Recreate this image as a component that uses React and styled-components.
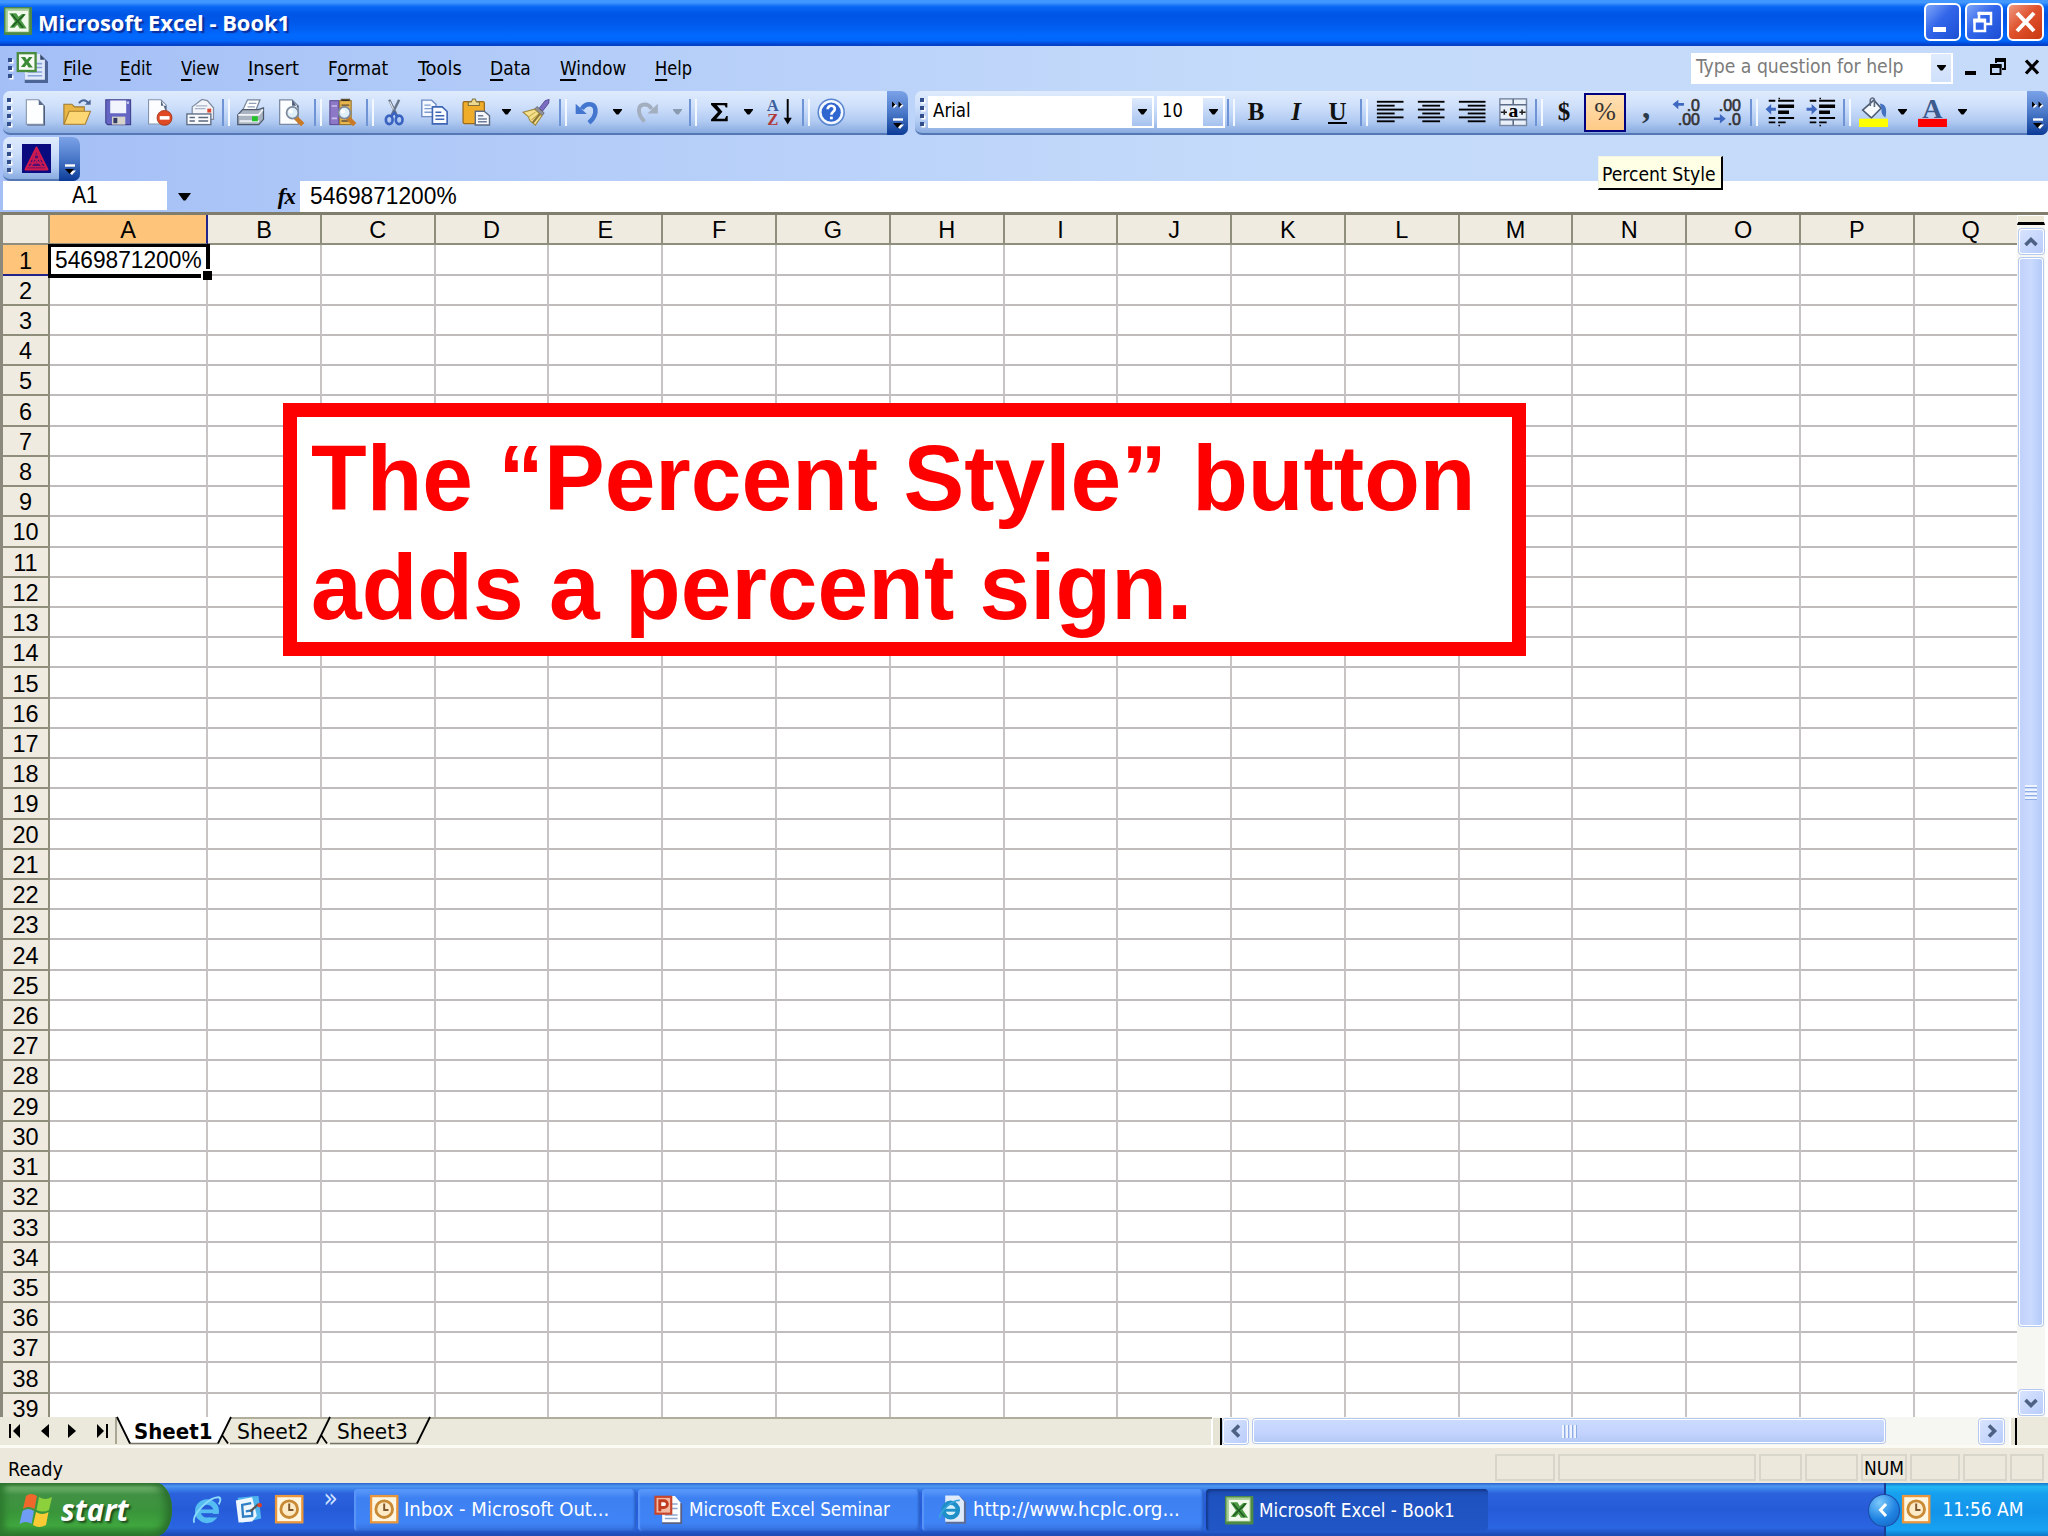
import { useLayoutEffect, useRef, useState } from "react";
import styled, { createGlobalStyle, css } from "styled-components";

const GlobalStyle = createGlobalStyle`
  * {
    box-sizing: border-box;
  }

  body {
    margin: 0;
    width: 2048px;
    height: 1536px;
    overflow: hidden;
    font-family: "DejaVu Sans Condensed", "DejaVu Sans", sans-serif;
    font-stretch: condensed;
    font-size: 19px;
    color: #000;
  }

  svg {
    display: block;
    flex: none;
    overflow: visible;
  }
`;

const Screen = styled.div`
  display: flex;
  flex-direction: column;
  width: 2048px;
  height: 1536px;
  overflow: hidden;
  background: linear-gradient(90deg, #a4bff6 0%, #b6cff9 33%, #c5dbfa 62%, #c6dbfa 100%);
`;

/* text squeezed or stretched to a set width */
const FitBox = styled.span`
  display: block;
  flex: none;
  height: 1.2em;
  line-height: 1.2em;
  white-space: pre;
`;

const FitInner = styled.span`
  display: inline-block;
  transform-origin: 0 50%;
`;

const Fit = ({ width, children, className }) => {
  const ref = useRef(null);
  const [scale, setScale] = useState(1);

  useLayoutEffect(() => {
    setScale(width / ref.current.offsetWidth);
  }, [width]);

  return (
    <FitBox className={className} style={{ width }}>
      <FitInner ref={ref} style={{ transform: `scaleX(${scale})` }}>
        {children}
      </FitInner>
    </FitBox>
  );
};

/* ---------- icons ---------- */

const Glyph = styled.text`
  font-family: "Liberation Serif", serif;
  font-weight: bold;
`;

const Digits = styled.text`
  font-family: "Liberation Sans", sans-serif;
  font-size: 8.8px;
  fill: #333;
  stroke: #333;
  stroke-width: 0.35px;
`;

const Icon = ({ size = 28.4, children }) => (
  <svg width={size} height={size} viewBox="0 0 16 16">
    {children}
  </svg>
);

const Arrow = ({ color = "#000" }) => (
  <svg width="9" height="6" viewBox="0 0 9 6">
    <path d="M0 0H9V1L5.5 5.5H3.5L0 1Z" fill={color} />
  </svg>
);

const ExcelIcon = ({ size }) => (
  <Icon size={size}>
    <rect width="16" height="16" rx="0.6" fill="#4e8a45" />
    <rect x="0.8" y="0.8" width="13.6" height="13.6" fill="#a5cc95" />
    <rect x="2.2" y="2.2" width="11.6" height="11.8" fill="#f1f8ec" />
    <path d="M3 3.5H7L8.3 5.6 10.3 4H12.5L9.8 7.6 13 12.3H9L7.6 10.2 6 11.8H3.2L6.2 8.2Z" fill="#4b9a43" />
    <path d="M4.4 4.2L11 11.8M11.6 4.3L4.6 11.3" stroke="#1f5c22" strokeWidth="0.9" />
  </Icon>
);

const BookIcon = () => (
  <Icon size={31}>
    <path d="M5 2H13L16 5V16H4V12Z" fill="#4c6496" />
    <path d="M4 1H12L14.4 4V14.3H4Z" fill="#dfe9fa" />
    <path d="M12 1V4H14.4Z" fill="#35486f" />
    <path d="M6 6H13M6 8H13M5.5 10.3H13M5.5 12.3H13" stroke="#86a2d6" strokeWidth="0.8" />
    <rect x="0.4" y="0.6" width="9.2" height="9.2" fill="#f6fbf3" stroke="#4a8c3e" strokeWidth="1.2" />
    <path d="M2 2.6H4.2L5.1 4 6.2 2.6H8L6 5.1 8.2 8H6L5 6.4 4 7.8H2L4 5.2Z" fill="#3b8a35" />
  </Icon>
);

const Page = () => (
  <>
    <path d="M3.5 1.5H10.5L13.5 4.5V15.5H3.5Z" fill="#49566e" />
    <path d="M3 1H10L12.7 4V14.8H3Z" fill="#fdfeff" stroke="#8493ac" strokeWidth="0.6" />
    <path d="M10 1V4H12.7Z" fill="#5a6c8c" />
  </>
);

const Magnifier = () => (
  <>
    <path d="M10.5 11L14.5 15" stroke="#c97a26" strokeWidth="2.6" />
    <circle cx="8.7" cy="8.3" r="3.3" fill="#dff0fb" stroke="#7e8a9b" strokeWidth="1" />
    <circle cx="7.8" cy="7.5" r="1.2" fill="#fff" />
  </>
);

const icons = {
  new: (
    <Icon>
      <Page />
    </Icon>
  ),
  open: (
    <Icon>
      <path d="M0.5 3.5H5L6.5 5H12V14.5H0.5Z" fill="#e9b545" stroke="#9c7a35" strokeWidth="0.6" />
      <path d="M3.5 7.5H15.5L12.5 14.8H0.6Z" fill="#fcd774" stroke="#a87f2f" strokeWidth="0.6" />
      <path d="M9 3C10.5 0.5 13 0.8 14.3 3" fill="none" stroke="#4c6797" strokeWidth="1.1" />
      <path d="M12.3 3.8H15.6V0.8Z" fill="#4c6797" />
    </Icon>
  ),
  save: (
    <Icon>
      <path d="M1 1H15V15H2L1 14Z" fill="#6464c2" stroke="#40408c" strokeWidth="0.6" />
      <rect x="3.5" y="1.4" width="9" height="7.2" fill="#f2f4fd" />
      <rect x="4.5" y="10.5" width="7.5" height="4.5" fill="#d5d3ca" />
      <rect x="5.3" y="11.2" width="2.2" height="3" fill="#333a63" />
      <rect x="12.8" y="2" width="1.3" height="1.3" fill="#c6c9ee" />
    </Icon>
  ),
  permission: (
    <Icon>
      <path d="M2 1H9L12 4V14.7H2Z" fill="#fbfdff" stroke="#8493ac" strokeWidth="0.6" />
      <path d="M9 1V4.3H12V8" fill="#566784" />
      <circle cx="11" cy="11.2" r="4.2" fill="#df4a25" stroke="#a43418" strokeWidth="0.5" />
      <rect x="8.3" y="10.2" width="5.5" height="2" fill="#fff" />
    </Icon>
  ),
  email: (
    <Icon>
      <path d="M3.5 5L9 0.8 12 1.5 15.5 5.5V12H3.5Z" fill="#f3f5fa" stroke="#7f8ba0" strokeWidth="0.7" />
      <path d="M5.5 4.5H12M5 6H11" stroke="#a9b4c6" strokeWidth="0.7" />
      <rect x="12" y="6" width="2.2" height="2.2" fill="#d84a30" />
      <rect x="0.5" y="9" width="13.5" height="6" fill="#fbfcfe" stroke="#63718a" strokeWidth="0.8" />
      <path d="M2 11H5M7 11H12.5M2 13H5M7 13H12.5" stroke="#59677f" strokeWidth="0.9" />
    </Icon>
  ),
  print: (
    <Icon>
      <path d="M6.5 1H13.5L11 7.5H3.5Z" fill="#fff" stroke="#77859a" strokeWidth="0.7" />
      <path d="M7.2 3H11.5M6.5 5H10.7" stroke="#8fa0b8" strokeWidth="0.7" />
      <path d="M1 9.5L3.7 6.5H12.5L15.5 5.5V12L12.8 15H1Z" fill="#aab3c0" stroke="#4b586c" strokeWidth="0.7" />
      <path d="M1.3 9.5H12.8L15.2 6.5" fill="none" stroke="#f4f6fa" strokeWidth="0.9" />
      <rect x="2" y="12.5" width="11" height="1.2" fill="#e8edf3" />
      <rect x="9" y="10.3" width="3.3" height="2.8" fill="#22c42a" />
    </Icon>
  ),
  preview: (
    <Icon>
      <path d="M1.5 1H8.5L12 4.5V14.8H1.5Z" fill="#fbfdff" stroke="#7b89a0" strokeWidth="0.7" />
      <path d="M8.5 1V4.3H12V6Z" fill="#4a5b7a" />
      <Magnifier />
    </Icon>
  ),
  research: (
    <Icon>
      <rect x="0.5" y="1.5" width="5" height="13.5" fill="#8c78c6" stroke="#5c4c94" strokeWidth="0.6" />
      <path d="M1.5 4.5H4.5M1.5 11.5H4.5" stroke="#c8bdec" strokeWidth="0.9" />
      <rect x="6" y="1.5" width="6.5" height="13.5" fill="#e8b64d" stroke="#93702c" strokeWidth="0.6" />
      <path d="M7 1.5V0.8H11.5V1.5M7 4H11.5M7 13H11" stroke="#5f5038" strokeWidth="0.8" />
      <Magnifier />
    </Icon>
  ),
  cut: (
    <Icon>
      <path d="M5.2 1L9.6 10M10.8 1L6.4 10" stroke="#687587" strokeWidth="1.4" />
      <path d="M5.5 2L7.6 6.3" stroke="#e4e9f0" strokeWidth="0.6" />
      <ellipse cx="5.2" cy="12.3" rx="1.9" ry="2.4" fill="none" stroke="#3a62c0" strokeWidth="1.5" />
      <ellipse cx="10.8" cy="12.3" rx="1.9" ry="2.4" fill="none" stroke="#3a62c0" strokeWidth="1.5" />
      <path d="M6.3 10.6L8 8.2 9.7 10.6" fill="none" stroke="#3a62c0" strokeWidth="1.3" />
    </Icon>
  ),
  copy: (
    <Icon>
      <path d="M1 1.2H6.5L9 3.5V10.5H1Z" fill="#f4f8ff" stroke="#6f8cc4" strokeWidth="0.8" />
      <path d="M2.5 4H6M2.5 6H7M2.5 8H7" stroke="#7d9bd0" strokeWidth="0.8" />
      <path d="M7 5H12.5L15.3 7.6V14.6H7Z" fill="#f7faff" stroke="#3f66b5" strokeWidth="0.9" />
      <path d="M8.7 8H12M8.7 10H13.7M8.7 12H13.7" stroke="#3f66b5" strokeWidth="0.9" />
    </Icon>
  ),
  paste: (
    <Icon>
      <rect x="0.6" y="2" width="12" height="12.4" rx="0.8" fill="#f0ad2c" stroke="#9a6a1a" strokeWidth="0.7" />
      <path d="M3.5 4.2V2.2H5.2L6 0.6H7.4L8.2 2.2H9.8V4.2Z" fill="#ecd98f" stroke="#81723c" strokeWidth="0.6" />
      <path d="M7.5 7.5H12.5L15.5 10V15.2H7.5Z" fill="#f5f7fb" stroke="#5c6a82" strokeWidth="0.8" />
      <path d="M9 10H12M9 11.8H14M9 13.4H14" stroke="#6c7c98" strokeWidth="0.8" />
    </Icon>
  ),
  painter: (
    <Icon>
      <path d="M9.7 5.8L13 1.5 15.3 0.8 15 3 11.5 7.5Z" fill="#7a6cc0" stroke="#51468c" strokeWidth="0.5" />
      <path d="M8.5 4.8L12.5 8.4 11.3 10 7.2 6.2Z" fill="#8f8f96" stroke="#55555c" strokeWidth="0.4" />
      <path d="M7 6.3L11.2 10 7.5 15.3 4.5 12.8 3.5 10.5 0.6 8Z" fill="#f5e08c" stroke="#9f8a40" strokeWidth="0.6" />
      <path d="M6 14L10 9" stroke="#8b7636" strokeWidth="1.2" />
      <path d="M4 10.5L7.5 8M5.3 12.4L9 9.2" stroke="#c9ae53" strokeWidth="0.6" />
    </Icon>
  ),
  undo: (
    <Icon>
      <path d="M5 6.2C7 2.6 12 2.6 12.6 6.4 13 9.5 11.3 12 9 14" fill="none" stroke="#4376cf" strokeWidth="2.6" />
      <path d="M1.5 3.2V9H7.8Z" fill="#4376cf" />
    </Icon>
  ),
  redo: (
    <Icon>
      <path d="M10.5 6.2C8.8 2.8 4 2.8 3.4 6.2 3 9.3 4.7 11.5 6.5 13.3" fill="none" stroke="#a3aebf" strokeWidth="2.2" />
      <path d="M14 3.2V8.8H8.2Z" fill="#a3aebf" />
    </Icon>
  ),
  sum: (
    <Icon>
      <path d="M3.4 2.8H12.6V5.4H11.7L11 4.1H6.7L9.8 7.8 6.4 11.7H11.2L12 10.2H12.8V13.1H3.4V12.1L7.3 7.9 3.4 3.8Z" />
    </Icon>
  ),
  sort: (
    <Icon>
      <Glyph x="1" y="7.2" fontSize="9.4" fill="#3b5f9e">
        A
      </Glyph>
      <Glyph x="1.2" y="15.2" fontSize="9.4" fill="#b03a3a">
        Z
      </Glyph>
      <path d="M12.8 0.6V12" stroke="#000" strokeWidth="1.1" />
      <path d="M10.5 11.2H15.1L12.8 15Z" />
    </Icon>
  ),
  help: (
    <Icon>
      <circle cx="8" cy="8" r="7.3" fill="#f3f8ff" stroke="#5a86cf" strokeWidth="0.9" />
      <circle cx="8" cy="8" r="5.4" fill="#2f66cf" />
      <path d="M6 6.4C6 3.6 10.4 3.8 10 6.5 9.8 7.8 8.1 7.8 8.1 9.4" fill="none" stroke="#fff" strokeWidth="1.5" />
      <rect x="7.3" y="10.5" width="1.6" height="1.5" fill="#fff" />
    </Icon>
  ),
  merge: (
    <Icon>
      <rect x="0.5" y="0.5" width="15" height="15" fill="#e9f0fa" stroke="#77869f" strokeWidth="0.8" />
      <path d="M0.5 3.8H15.5M0.5 12.2H15.5M8 0.5V3.8M8 12.2V15.5" stroke="#5d6d88" strokeWidth="0.9" />
      <path d="M1 8H4.5M11.5 8H15M3 6.5V9.5M13 6.5V9.5" stroke="#222" strokeWidth="0.9" />
      <Glyph x="5.3" y="10.9" fontSize="11">
        a
      </Glyph>
    </Icon>
  ),
  incDecimal: (
    <Icon size={29}>
      <path d="M0.3 3.5L3.5 0.9V2.8H6.6V4.3H3.5V6.2Z" fill="#3f68c0" />
      <Digits x="8.1" y="7.2">
        .0
      </Digits>
      <Digits x="3.2" y="15">
        .00
      </Digits>
    </Icon>
  ),
  decDecimal: (
    <Icon size={29}>
      <path d="M7 11.4L3.8 8.8V10.7H0.5V12.2H3.8V14.1Z" fill="#3f68c0" />
      <Digits x="3.2" y="7.2">
        .00
      </Digits>
      <Digits x="8.1" y="15">
        .0
      </Digits>
    </Icon>
  ),
};

const AlignIcon = ({ kind }) => {
  const rows = [15, 10, 15, 10, 15, 10].map((w, i) => {
    const x = { left: 0.5, center: 8 - w / 2, right: 15.5 - w }[kind];
    return <rect key={i} x={x} y={1.6 + i * 2.2} width={w} height="1.05" />;
  });
  return <Icon>{rows}</Icon>;
};

const IndentIcon = ({ out }) => (
  <Icon size={30}>
    <path d="M2 2H5.5M7 2H15.5M2 13.5H5.5M7 13.5H11" stroke="#000" strokeWidth="1" />
    <path d="M7 4.9H15.5M7 8.1H12.8" stroke="#000" strokeWidth="1.9" />
    <path d="M2 11.2H5.5M7 11.2H15.5" stroke="#000" strokeWidth="1" />
    <path d="M7.6 0.4V1.2M7.6 14.8V15.6" stroke="#000" strokeWidth="0.8" />
    {out ? (
      <path d="M0.3 6.5L3.3 3.7V5.7H5.8V7.3H3.3V9.3Z" fill="#3f68c0" />
    ) : (
      <path d="M6 6.5L3 3.7V5.7H0.3V7.3H3V9.3Z" fill="#3f68c0" />
    )}
  </Icon>
);

const FillIcon = () => (
  <svg width="29" height="30" viewBox="0 0 16 16.6">
    <path d="M2 7.2L8.2 1.8 12.2 6.2 6.8 11.6Z" fill="#f6f9fd" stroke="#4c5b74" strokeWidth="0.9" />
    <path d="M6.2 5V1.6C6.6 0.1 8.4 0.3 8.5 1.6V5.5" fill="none" stroke="#5f6c80" strokeWidth="0.9" />
    <path d="M11.5 3.6C15 3.8 15.6 7 14.6 11.4 13 10.3 12.2 9 12.4 6.6Z" fill="#4472c0" />
    <rect y="12" width="16" height="4.6" fill="#ff0" />
  </svg>
);

const FontColorIcon = () => (
  <svg width="29" height="30" viewBox="0 0 16 16.6">
    <Glyph x="8" y="11.4" fontSize="15.5" textAnchor="middle" fill="#3c5a8e">
      A
    </Glyph>
    <rect y="12.1" width="16" height="4.5" fill="#f00" />
  </svg>
);

const TriangleIcon = () => (
  <Icon size={29}>
    <rect width="16" height="16" fill="#0b0b80" />
    <path d="M8 2L14 14H2Z" fill="#4a0f70" stroke="#d21a4c" strokeWidth="1.2" strokeLinejoin="round" />
    <path d="M6 6H10M5 8.3H11M4 10.5H12M3 12.5H13M8 3L5 13M8 3L11 13M6 7L12 13M10 7L4 13" stroke="#c81b55" strokeWidth="0.8" />
  </Icon>
);

const OutlookIcon = ({ size }) => (
  <Icon size={size}>
    <rect x="0.6" y="0.6" width="14.8" height="14.8" fill="#fff6e2" stroke="#e9963c" strokeWidth="1.3" />
    <circle cx="8" cy="8" r="4.7" fill="#fdebc8" stroke="#c98a35" strokeWidth="1.6" />
    <path d="M8 4.8V8.4H10.4" fill="none" stroke="#80572c" strokeWidth="1.1" />
  </Icon>
);

const IeIcon = ({ size = 30 }) => (
  <Icon size={size}>
    <circle cx="8" cy="8.6" r="4.9" fill="none" stroke="#56bdf2" strokeWidth="3" />
    <path d="M4 8.7H13" stroke="#56bdf2" strokeWidth="2" />
    <path d="M9.5 10.1H15V12H9.5Z" fill="#2a62d8" />
    <path d="M1.2 14.8C-0.5 11 9 1 14.2 1.2 15.8 1.6 15 3.8 14.2 5" fill="none" stroke="#8ad8fa" strokeWidth="1" />
  </Icon>
);

const IePageIcon = () => (
  <Icon size={29}>
    <path d="M4.5 0.5H12L15.5 4V15.8H4.5Z" fill="#5d6d95" />
    <path d="M4 0.3H11.5L14.3 3.5V14.8H4Z" fill="#dfeafb" />
    <circle cx="7" cy="8.3" r="4" fill="#d5f0fd" stroke="#1f8fc8" strokeWidth="2.4" />
    <path d="M3.6 8.4H10.5" stroke="#1f8fc8" strokeWidth="1.6" />
    <path d="M0.8 13C1 9 8 2.5 12 3" fill="none" stroke="#3aa4dc" strokeWidth="1" />
  </Icon>
);

const DesktopIcon = () => (
  <Icon size={29}>
    <path d="M2 1.5L13.5 0.5 15 13 4 15.5Z" fill="#4fb4ee" />
    <path d="M1 3L10 1.2 12.6 11.5 10 14.6 2.5 15.2Z" fill="#eef7ff" />
    <path d="M9.5 4.5L4.5 5.5 5 12 10 11.5 10 8.5 6.5 9" fill="none" stroke="#2f7fc4" strokeWidth="1.3" />
    <path d="M9 9L13.5 5" stroke="#555" strokeWidth="1.2" />
    <circle cx="14.2" cy="5.6" r="1.2" fill="#e23c22" />
  </Icon>
);

const PowerPointIcon = () => (
  <Icon size={29}>
    <path d="M5.5 1.5H12L15.5 5V16H4.5V12Z" fill="#5b5f80" />
    <path d="M4.5 0.5H11.5L14.5 4V15H4.5Z" fill="#fbfdff" />
    <path d="M9.5 5H13M9.5 7.5H13M6 11H13M6 13H13" stroke="#8fa6cf" strokeWidth="0.8" />
    <rect x="0.8" y="1" width="8.7" height="9.3" fill="#f3b9a0" stroke="#c7452a" strokeWidth="1.2" />
    <path d="M3.2 9V3.2H5.5A1.8 1.8 0 0 1 5.5 6.9H3.2" fill="#fff" stroke="#c23c20" strokeWidth="1.6" />
  </Icon>
);

const WindowsFlag = () => (
  <svg width="34" height="36" viewBox="0 0 34 36">
    <path d="M7 4Q12 0 18 4L15.5 17Q9 13 4 17Z" fill="#f0672b" />
    <path d="M20 5Q26 9 33 5L30 18Q24 21 17.5 18Z" fill="#8cd03c" />
    <path d="M3.5 19Q9 15 15 19L12.5 32Q7 28 0.5 32Z" fill="#6f9df5" />
    <path d="M17 20Q23 24 29.5 20L27 33Q20 37 14 33Z" fill="#fbcb35" />
  </svg>
);

/* ---------- title bar ---------- */

const TitleBar = styled.header`
  display: flex;
  flex: none;
  align-items: flex-start;
  height: 46px;
  padding: 7px 4px 0 4px;
  background: linear-gradient(#3f97ff 0, #4398ff 5%, #0866f4 15%, #0055e4 32%, #0058ea 48%, #0169fd 78%, #0166fb 88%, #0142cc 97%, #0a3fc0 100%);
`;

const Title = styled(Fit)`
  margin: 4px 0 0 6px;
  font-family: "Open Sans", sans-serif;
  font-size: 21px;
  font-weight: bold;
  font-stretch: normal;
  color: #fff;
  text-shadow: 2px 2px 1px #0a2f9e;
`;

const WindowButtons = styled.div`
  display: flex;
  gap: 4px;
  margin: -4px 0 0 auto;
`;

const WindowButton = styled.div`
  width: 37.5px;
  height: 38px;
  border: 2px solid #fff;
  border-radius: 6px;
  background: ${({ $close }) =>
    $close
      ? "linear-gradient(135deg, #ee9a80, #e0532f 45%, #c9370f)"
      : "linear-gradient(135deg, #7fa6f8, #3165ea 45%, #1c4fd4)"};
`;

/* ---------- menu ---------- */

const MenuBar = styled.nav`
  display: flex;
  flex: none;
  align-items: center;
  height: 44px;
  padding-left: 3px;
`;

const Grip = styled.div`
  display: flex;
  flex: none;
  flex-direction: column;
  align-items: center;
  justify-content: center;
  gap: 4px;
  width: ${({ $w }) => $w || 12}px;

  & > i {
    width: 4px;
    height: 4px;
    background: #324f8c;
    box-shadow: 1.5px 1.5px 0 #fff;
  }
`;

const GripDots = ({ count = 4, w }) => (
  <Grip $w={w}>
    {Array.from({ length: count }, (_, i) => (
      <i key={i} />
    ))}
  </Grip>
);

const MenuItem = styled.div`
  display: flex;
  flex: none;
  width: ${({ $w }) => $w}px;

  u {
    text-decoration-thickness: 2px;
    text-underline-offset: 4px;
  }
`;

const MenuIcon = styled.div`
  width: 46px;
  margin-top: -2px;
`;

const QuestionBox = styled.div`
  display: flex;
  align-items: center;
  width: 262px;
  height: 31px;
  margin-left: auto;
  padding: 0 2px 0 5px;
  background: #fff;
  color: #7b7b7b;
`;

const QuestionText = styled(Fit)`
  margin-top: -3px;
`;

const ComboButton = styled.div`
  display: flex;
  align-items: center;
  justify-content: center;
  flex: none;
  width: 20px;
  height: 28px;
  margin-left: auto;
  background: linear-gradient(#dfebfd, ${({ $flat }) => ($flat ? "#cfe0fb" : "#a5c2ef")});
`;

const MdiButtons = styled.div`
  display: flex;
  width: 83px;
  margin-right: 12px;
  padding-left: 4px;
`;

/* ---------- toolbars ---------- */

const ToolRow = styled.div`
  display: flex;
  flex: none;
  gap: 7px;
  height: 44px;
  margin-top: ${({ $top }) => $top || 0}px;
  padding-left: 3px;
`;

const Toolbar = styled.div`
  display: flex;
  align-items: center;
  width: ${({ $w }) => $w}px;
  height: 44px;
  border-bottom: 2px solid #5577b4;
  border-radius: 7px;
  background: linear-gradient(#dfebfd 0%, #cfe0fb 35%, #b3ccf3 70%, #89abe0 100%);
`;

const Tool = styled.div`
  display: flex;
  align-items: center;
  justify-content: center;
  flex: none;
  width: ${({ $w }) => $w || 41}px;
  height: 39px;

  ${({ $active }) =>
    $active &&
    css`
      border: 2px solid #000080;
      background: linear-gradient(#fee0b4, #ffca86);
    `}
`;

const Separator = styled.div`
  display: flex;
  flex: none;
  justify-content: center;
  width: ${({ $w }) => $w || 11}px;

  &::before {
    content: "";
    width: 4px;
    height: 27px;
    border-left: 2px solid #6f94d6;
    border-right: 2px solid #f3f8ff;
  }
`;

const Options = styled.div`
  display: flex;
  flex: none;
  align-items: center;
  justify-content: ${({ $single }) => ($single ? "flex-end" : "space-between")};
  flex-direction: column;
  align-self: stretch;
  width: 21px;
  height: 44px;
  margin-left: auto;
  padding: 9px 0 5px;
  border-radius: 0 7px 7px 0;
  background: linear-gradient(#7ba2e7, #4a78c8 50%, #0b3b97);
`;

const SerifTool = styled.span`
  font-family: "Liberation Serif", serif;
  font-size: 25px;
  font-weight: bold;
  font-style: ${({ $italic }) => ($italic ? "italic" : "normal")};
  border-bottom: ${({ $under }) => ($under ? "2px solid #000" : "none")};
  line-height: ${({ $under }) => ($under ? 21 : 28)}px;
  color: #111;
`;

const PercentSign = styled.span`
  font-family: "Liberation Serif", serif;
  font-size: 26px;
  color: #333;
`;

const Comma = styled.span`
  padding-bottom: 10px;
  font-family: "Liberation Serif", serif;
  font-size: 33px;
  font-weight: bold;
  line-height: 36px;
  color: #2c3a4c;
`;

const Combo = styled.div`
  display: flex;
  align-items: center;
  flex: none;
  width: ${({ $w }) => $w}px;
  height: 32px;
  margin-right: ${({ $gap }) => $gap}px;
  padding: 0 2px 0 5px;
  background: #fff;
`;

const ComboText = styled(Fit)`
  margin-top: -3px;
`;

const OptionsGlyph = ({ single }) => (
  <Options $single={single}>
    {!single && (
      <svg width="13" height="10" viewBox="0 0 13 10">
        <path d="M2.5 2.5L6 5.5 2.5 8.5ZM9 2.5L12.5 5.5 9 8.5Z" fill="#fff" />
        <path d="M1 1.5L4.5 4.5 1 7.5ZM7.5 1.5L11 4.5 7.5 7.5Z" fill="#000" />
      </svg>
    )}
    <svg width="12" height="12" viewBox="0 0 12 12">
      <path d="M1 1.5H11" stroke="#fff" strokeWidth="2.4" />
      <path d="M3 6.5H12L8 11Z" fill="#fff" />
      <path d="M1 5H10L5.5 10Z" fill="#000" />
    </svg>
  </Options>
);

/* ---------- formula bar ---------- */

const FormulaBar = styled.div`
  display: flex;
  flex: none;
  height: 31px;
  margin-left: 3px;
  font-family: "Liberation Sans", sans-serif;
  font-size: 23.5px;
`;

const NameBox = styled.div`
  display: flex;
  align-items: center;
  justify-content: center;
  width: 164px;
  height: 29px;
  background: #fff;
`;

const FormulaTools = styled.div`
  display: flex;
  align-items: center;
  justify-content: space-between;
  width: 133px;
  padding: 0 5px 0 11px;
`;

const Fx = styled.span`
  font-family: "Liberation Serif", serif;
  font-size: 23px;
  font-style: italic;
  font-weight: bold;
  letter-spacing: -1px;
`;

const Formula = styled.div`
  display: flex;
  align-items: center;
  flex: 1;
  padding-left: 10px;
  background: #fff;
`;

/* ---------- sheet ---------- */

const SheetArea = styled.div`
  position: relative;
  display: flex;
  flex: none;
  height: 1205px;
  overflow: hidden;
  border-top: 3px solid #807d6c;
  border-left: 3px solid #8b897b;
  background: #fff;
`;

const Grid = styled.div`
  flex: none;
  width: 2014px;
  height: 1202px;
  overflow: hidden;
  font-family: "Liberation Sans", sans-serif;
  font-size: 23.5px;
`;

const GridRow = styled.div`
  display: flex;
  width: 2150px;
  height: ${({ $header }) => ($header ? 30.4 : 30.222)}px;
`;

const HeaderCell = styled.div`
  display: flex;
  align-items: center;
  justify-content: center;
  flex: none;
  width: ${({ $w }) => $w}px;
  padding-top: 2px;
  border-right: 2px solid #8f8d7c;
  border-bottom: 2px solid #8f8d7c;
  background: ${({ $on }) => ($on ? "#fdc47a" : "#f0ebe0")};
  line-height: 26px;

  ${({ $on }) => $on === "col" && "border-right-color: #23238c;"}
  ${({ $on }) => $on === "row" && "border-color: #23238c;"}
`;

const Cell = styled.div`
  flex: none;
  width: ${({ $w }) => $w}px;
  padding: 1px 0 0 5px;
  border-right: 2px solid #c8c4c4;
  border-bottom: 2px solid #c0bcbc;
  line-height: 28px;
`;

const Selection = styled.div`
  position: absolute;
  left: 45px;
  top: 29px;
  width: 162px;
  height: 34px;
  border: 3px solid #000;
  border-bottom-width: 4px;
  border-right-width: 4px;

  &::after {
    content: "";
    position: absolute;
    right: -6px;
    bottom: -6px;
    width: 9px;
    height: 9px;
    border: 1px solid #fff;
    border-width: 2px 0 0 2px;
    box-sizing: content-box;
    background: #000;
  }
`;

const Callout = styled.div`
  position: absolute;
  left: 280px;
  top: 188px;
  width: 1243px;
  height: 253px;
  padding: 7px 0 0 14px;
  border: 14px solid #f00;
  background: #fff;
  font-family: "Liberation Sans", sans-serif;
  font-size: 93px;
  font-weight: bold;
  color: #f00;
`;

const CalloutLine = styled(Fit)`
  height: 109px;
  line-height: 109px;
`;

const VScroll = styled.div`
  display: flex;
  flex-direction: column;
  align-items: center;
  width: 28px;
  background: #f6f6f2;
`;

const VSplit = styled.div`
  width: 28px;
  height: 10px;
  border: 1px solid #fff;
  border-bottom: 3px solid #000;
  background: #ece9d8;
`;

const scrollFace = css`
  display: flex;
  align-items: center;
  justify-content: center;
  flex: none;
  border: 1px solid #fff;
  border-radius: 3px;
  box-shadow: 0 0 0 1px #b5c8f0;
`;

const ScrollButton = styled.div`
  ${scrollFace}
  width: 25px;
  height: 25px;
  margin: ${({ $m }) => $m || 0};
  background: linear-gradient(135deg, #d8e3fe, #b9cdfb);
`;

const VThumb = styled.div`
  ${scrollFace}
  flex-direction: column;
  gap: 2px;
  width: 24px;
  height: 1068px;
  margin-top: 4px;
  background: linear-gradient(90deg, #c3d1fb, #c9dafd 50%, #b4cbfa);
`;

const HThumb = styled.div`
  ${scrollFace}
  gap: 2px;
  width: 632px;
  height: 24px;
  margin-left: 5px;
  background: linear-gradient(#cbdafd, #c3d3fd 60%, #b3c9f6);
`;

const GripLine = styled.i`
  width: ${({ $v }) => ($v ? 2 : 12)}px;
  height: ${({ $v }) => ($v ? 13 : 2)}px;
  background: #eef4fe;
  box-shadow: ${({ $v }) => ($v ? "1px 0" : "0 1px")} 0 #8eabe6;
`;

const Chevron = ({ turn = 0 }) => (
  <svg width="14" height="14" viewBox="0 0 14 14">
    <path d="M1.5 10L7 4.5 12.5 10" fill="none" stroke="#4d6185" strokeWidth="3.6" transform={`rotate(${turn} 7 7)`} />
  </svg>
);

/* ---------- sheet tabs ---------- */

const TabBar = styled.div`
  display: flex;
  flex: none;
  height: 31px;
  padding-left: 3px;
  border-bottom: 3px solid #fbfaf3;
  background: #eae9db;
`;

const TabNav = styled.div`
  display: flex;
  align-items: center;
  justify-content: space-between;
  width: 114px;
  height: 27px;
  padding: 0 7px 0 6px;
  border-right: 2px solid #a9a794;
`;

const Tabs = styled.div`
  display: flex;
  position: relative;
  width: 1095px;
  height: 28px;
  border-top: 2px solid #b0ad9c;
  font-size: 22px;
`;

/* slanted outlines of the three tabs, under their labels */
const TabShapes = styled.svg`
  position: absolute;
  left: 0;
  top: -2px;
`;

const TabLabel = styled(Fit)`
  position: relative;
  margin-left: ${({ $gap }) => $gap}px;
  font-weight: ${({ $bold }) => ($bold ? "bold" : "normal")};
`;

const HScroll = styled.div`
  display: flex;
  align-items: center;
  width: 806px;
  height: 28px;
  margin-left: -1px;
  background: #f6f6f2;
`;

const HSplit = styled.div`
  width: ${({ $w }) => $w}px;
  height: 27px;
  border-left: 2px solid #fff;
  border-right: 2px solid #000;
  background: #e6e4d4;
`;

/* ---------- status bar ---------- */

const StatusBar = styled.div`
  display: flex;
  flex: none;
  align-items: center;
  height: 35px;
  padding: 4px 4px 0 8px;
  background: #ece9dc;
`;

const ReadyText = styled(Fit)`
  margin-top: 3px;
`;

const StatusCells = styled.div`
  display: flex;
  gap: 3px;
  margin-left: auto;
`;

const StatusCell = styled.div`
  display: flex;
  align-items: center;
  justify-content: center;
  width: ${({ $w }) => $w}px;
  height: 27px;
  padding-top: 1px;
  border: 2px solid #d8d5ca;
`;

/* ---------- taskbar ---------- */

const Taskbar = styled.footer`
  display: flex;
  flex: none;
  height: 53px;
  background: linear-gradient(#2c62cf 0, #4f98f0 6%, #3e86ec 10%, #2b62dc 20%, #265bd8 50%, #2a65e2 85%, #1e4db8 97%);
  color: #fff;
`;

const StartButton = styled.div`
  display: flex;
  align-items: center;
  width: 172px;
  padding: 0 0 0 19px;
  border-radius: 0 16px 16px 0 / 0 27px 27px 0;
  background: linear-gradient(#3a7f3a 0, #74b671 8%, #419144 22%, #3a953a 55%, #3fa63e 80%, #2f7d30 100%);
  box-shadow: inset -6px 0 8px #2a6e2c, inset 5px 0 6px #2f7d30;
`;

const StartLabel = styled(Fit)`
  margin-left: 8px;
  font-family: "Open Sans", sans-serif;
  font-size: 31px;
  font-style: italic;
  font-weight: bold;
  font-stretch: normal;
  text-shadow: 2px 2px 2px #1d4d1d;
`;

const QuickLaunch = styled.div`
  display: flex;
  align-items: center;
  gap: 12px;
  width: 182px;
  padding-left: 20px;
`;

const More = styled.span`
  align-self: flex-start;
  margin: 2px 0 0 8px;
  font-size: 26px;
  line-height: 26px;
  color: #cfe2ff;
`;

const TaskButton = styled.div`
  display: flex;
  align-items: center;
  width: 282px;
  height: 42px;
  margin: 6px 2px 0 0;
  padding: 0 0 ${({ $active }) => ($active ? 0 : 1)}px ${({ $pad }) => $pad || 16}px;
  border-radius: 4px;
  background: ${({ $active }) =>
    $active ? "linear-gradient(#1b49ad, #1e52bf 20%, #2056c6)" : "linear-gradient(#5c9bfb, #3d80f2 22%, #3f84f6 80%, #356fdf)"};
  box-shadow: ${({ $active }) => ($active ? "inset 2px 2px 2px #143a8d" : "inset -2px -1px 2px #2c63cc, inset 2px 0 1px #5a95f8")};
`;

const TaskLabel = styled(Fit)`
  margin-left: 6px;
`;

const Tray = styled.div`
  position: relative;
  display: flex;
  align-items: center;
  width: 164px;
  margin-left: auto;
  padding-left: 16px;
  border-left: 2px solid #1a3e94;
  background: linear-gradient(#1877c9 0, #23b6f3 7%, #16a0ef 20%, #1293ea 55%, #17a2f2 88%, #0f76c8 100%);
`;

const TrayToggle = styled.div`
  position: absolute;
  left: -18px;
  top: 11px;
  width: 32px;
  height: 33px;
  padding: 8px 0 0 9px;
  border: 1px solid #1d4ba8;
  border-radius: 50%;
  background: radial-gradient(circle at 35% 25%, #7cc9fb, #1f83e2 55%, #1560bd);
`;

const Clock = styled(Fit)`
  margin-left: 12px;
`;

const Tooltip = styled.div`
  position: absolute;
  left: 1598px;
  top: 156px;
  width: 125px;
  height: 34px;
  padding: 6px 0 0 3px;
  border: 1px solid #f4f4e4;
  border-right: 2px solid #000;
  border-bottom: 2px solid #000;
  background: #ffffe6;
`;

const menus = [
  { key: "F", before: "", after: "ile", w: 57, text: 29 },
  { key: "E", before: "", after: "dit", w: 61, text: 32 },
  { key: "V", before: "", after: "iew", w: 67, text: 39 },
  { key: "I", before: "", after: "nsert", w: 80, text: 51 },
  { key: "o", before: "F", after: "rmat", w: 90, text: 60 },
  { key: "T", before: "", after: "ools", w: 72, text: 44 },
  { key: "D", before: "", after: "ata", w: 70, text: 41 },
  { key: "W", before: "", after: "indow", w: 95, text: 66 },
  { key: "H", before: "", after: "elp", w: 60, text: 37 },
];

const standardTools = [
  ["new", 41],
  ["open", 42],
  ["save", 41],
  ["permission", 41],
  ["email", 41],
  ["sep", 9],
  ["print", 41],
  ["preview", 41],
  ["sep", 11],
  ["research", 41],
  ["sep", 11],
  ["cut", 39],
  ["copy", 41],
  ["paste", 42],
  ["arrow", 18],
  ["painter", 42],
  ["sep", 11],
  ["undo", 39],
  ["arrow", 20],
  ["redo", 40],
  ["arrow", 20, "#8a9ab0"],
  ["sep", 12],
  ["sum", 40],
  ["arrow", 19],
  ["sort", 42],
  ["sep", 11],
  ["help", 41],
];

const columns = "BCDEFGHIJKLMNOPQ".split("");
const rows = Array.from({ length: 39 }, (_, i) => i + 1);
const COLUMN_WIDTH = 113.78;

const StandardToolbar = () => (
  <Toolbar $w={905}>
    <GripDots w={12} />
    {standardTools.map(([name, w, color], i) => {
      if (name === "sep") return <Separator key={i} $w={w} />;
      return (
        <Tool key={i} $w={w}>
          {name === "arrow" ? <Arrow color={color} /> : icons[name]}
        </Tool>
      );
    })}
    <OptionsGlyph />
  </Toolbar>
);

const FormattingToolbar = () => (
  <Toolbar $w={1133}>
    <GripDots w={13} />
    <Combo $w={226} $gap={3}>
      <ComboText width={38}>Arial</ComboText>
      <ComboButton>
        <Arrow />
      </ComboButton>
    </Combo>
    <Combo $w={68} $gap={0}>
      <ComboText width={21}>10</ComboText>
      <ComboButton>
        <Arrow />
      </ComboButton>
    </Combo>
    <Separator $w={12} />
    <Tool $w={38}>
      <SerifTool>B</SerifTool>
    </Tool>
    <Tool $w={42}>
      <SerifTool $italic>I</SerifTool>
    </Tool>
    <Tool>
      <SerifTool $under>U</SerifTool>
    </Tool>
    <Separator $w={12} />
    <Tool>
      <AlignIcon kind="left" />
    </Tool>
    <Tool>
      <AlignIcon kind="center" />
    </Tool>
    <Tool>
      <AlignIcon kind="right" />
    </Tool>
    <Tool>{icons.merge}</Tool>
    <Separator $w={10} />
    <Tool $w={40}>
      <SerifTool>$</SerifTool>
    </Tool>
    <Tool $w={42} $active>
      <PercentSign>%</PercentSign>
    </Tool>
    <Tool $w={40}>
      <Comma>,</Comma>
    </Tool>
    <Tool>{icons.incDecimal}</Tool>
    <Tool>{icons.decDecimal}</Tool>
    <Separator />
    <Tool>
      <IndentIcon out />
    </Tool>
    <Tool>
      <IndentIcon />
    </Tool>
    <Separator $w={12} />
    <Tool $w={40}>
      <FillIcon />
    </Tool>
    <Tool $w={19}>
      <Arrow />
    </Tool>
    <Tool>
      <FontColorIcon />
    </Tool>
    <Tool $w={19}>
      <Arrow />
    </Tool>
    <OptionsGlyph />
  </Toolbar>
);

const Sheet = () => (
  <SheetArea>
    <Grid>
      <GridRow $header>
        <HeaderCell $w={47} />
        <HeaderCell $w={158.2} $on="col">
          A
        </HeaderCell>
        {columns.map((letter) => (
          <HeaderCell key={letter} $w={COLUMN_WIDTH}>
            {letter}
          </HeaderCell>
        ))}
      </GridRow>
      {rows.map((row) => (
        <GridRow key={row}>
          <HeaderCell $w={47} $on={row === 1 && "row"}>
            {row}
          </HeaderCell>
          <Cell $w={158.2}>{row === 1 && <Fit width={147}>5469871200%</Fit>}</Cell>
          {columns.map((letter) => (
            <Cell key={letter} $w={COLUMN_WIDTH} />
          ))}
        </GridRow>
      ))}
    </Grid>
    <VScroll>
      <VSplit />
      <ScrollButton $m="4px 0 0">
        <Chevron />
      </ScrollButton>
      <VThumb>
        <GripLine />
        <GripLine />
        <GripLine />
        <GripLine />
      </VThumb>
      <ScrollButton $m="auto 0 2px">
        <Chevron turn={180} />
      </ScrollButton>
    </VScroll>
    <Selection />
    <Callout>
      <CalloutLine width={1164}>The “Percent Style” button</CalloutLine>
      <CalloutLine width={881}>adds a percent sign.</CalloutLine>
    </Callout>
  </SheetArea>
);

const NavArrow = ({ back, end }) => (
  <svg width={end ? 12 : 8} height="14" viewBox={end ? "0 0 12 14" : "0 0 8 14"}>
    <g transform={back ? undefined : `translate(${end ? 12 : 8} 0) scale(-1 1)`}>
      {end && <path d="M1 0V14" stroke="#000" strokeWidth="2" />}
      <path d={end ? "M11 0V14L4 7Z" : "M8 0V14L0 7Z"} />
    </g>
  </svg>
);

const SheetTabs = () => (
  <TabBar>
    <TabNav>
      <NavArrow back end />
      <NavArrow back />
      <NavArrow />
      <NavArrow end />
    </TabNav>
    <Tabs>
      <TabShapes width="330" height="28" viewBox="0 0 330 28">
        <path d="M0 0H114L101 26.5H13Z" fill="#fff" />
        <path d="M13 26.5H101M113 26.5H200M213 26.5H300" stroke="#77756a" strokeWidth="1.6" />
        <path
          d="M0 0L13 26.5M101 26.5L114 0M105 18L111 26.5M200 26.5L213 0M204 18L210 26.5M300 26.5L313 0"
          fill="none"
          stroke="#000"
          strokeWidth="1.8"
        />
      </TabShapes>
      <TabLabel width={78} $gap={17} $bold>
        Sheet1
      </TabLabel>
      <TabLabel width={72} $gap={25}>
        Sheet2
      </TabLabel>
      <TabLabel width={71} $gap={28}>
        Sheet3
      </TabLabel>
    </Tabs>
    <HScroll>
      <HSplit $w={11} />
      <ScrollButton $m="0 0 0 1px">
        <Chevron turn={-90} />
      </ScrollButton>
      <HThumb>
        <GripLine $v />
        <GripLine $v />
        <GripLine $v />
        <GripLine $v />
      </HThumb>
      <ScrollButton $m="0 5px 0 auto">
        <Chevron turn={90} />
      </ScrollButton>
      <HSplit $w={8} />
    </HScroll>
  </TabBar>
);

export default function App() {
  return (
    <>
      <GlobalStyle />
      <Screen>
        <TitleBar>
          <ExcelIcon size={28} />
          <Title width={252}>Microsoft Excel - Book1</Title>
          <WindowButtons>
            <WindowButton>
              <svg width="33" height="34" viewBox="0 0 33 34">
                <rect x="7" y="22" width="13" height="5" fill="#fff" />
              </svg>
            </WindowButton>
            <WindowButton>
              <svg width="33" height="34" viewBox="0 0 33 34">
                <path d="M12 14V8H24V19H19" fill="none" stroke="#fff" strokeWidth="2.5" />
                <path d="M10.5 8.5H25" stroke="#fff" strokeWidth="3" />
                <path d="M7.5 15.5H18V26H7.5Z" fill="none" stroke="#fff" strokeWidth="2.5" />
                <path d="M6.3 15.5H19" stroke="#fff" strokeWidth="4" />
              </svg>
            </WindowButton>
            <WindowButton $close>
              <svg width="33" height="34" viewBox="0 0 33 34">
                <path d="M8 8L25 26M25 8L8 26" stroke="#fff" strokeWidth="4" />
              </svg>
            </WindowButton>
          </WindowButtons>
        </TitleBar>

        <MenuBar>
          <GripDots count={3} w={14} />
          <MenuIcon>
            <BookIcon />
          </MenuIcon>
          {menus.map((menu) => (
            <MenuItem key={menu.key + menu.after} $w={menu.w}>
              <Fit width={menu.text}>
                {menu.before}
                <u>{menu.key}</u>
                {menu.after}
              </Fit>
            </MenuItem>
          ))}
          <QuestionBox>
            <QuestionText width={207}>Type a question for help</QuestionText>
            <ComboButton $flat>
              <Arrow />
            </ComboButton>
          </QuestionBox>
          <MdiButtons>
            <svg width="80" height="20" viewBox="0 0 80 20">
              <rect x="8" y="13" width="11" height="4" />
              <path d="M39 5V1.5H48V11H45" fill="none" stroke="#000" strokeWidth="2" />
              <path d="M38 2H49" stroke="#000" strokeWidth="4" />
              <rect x="34" y="7.5" width="9.5" height="8.5" fill="none" stroke="#000" strokeWidth="2" />
              <path d="M33 8H44.5" stroke="#000" strokeWidth="4" />
              <path d="M69 2.5L81 15.5M81 2.5L69 15.5" stroke="#000" strokeWidth="3.2" />
            </svg>
          </MdiButtons>
        </MenuBar>

        <ToolRow $top={1}>
          <StandardToolbar />
          <FormattingToolbar />
        </ToolRow>
        <ToolRow $top={2}>
          <Toolbar $w={77}>
            <GripDots w={12} />
            <Tool $w={42}>
              <TriangleIcon />
            </Tool>
            <OptionsGlyph single />
          </Toolbar>
        </ToolRow>

        <FormulaBar>
          <NameBox>
            <Fit width={26}>A1</Fit>
          </NameBox>
          <FormulaTools>
            <svg width="13" height="8" viewBox="0 0 13 8">
              <path d="M0 0H13L7.5 7.5H5.5Z" />
            </svg>
            <Fx>fx</Fx>
          </FormulaTools>
          <Formula>
            <Fit width={147}>5469871200%</Fit>
          </Formula>
        </FormulaBar>

        <Sheet />
        <SheetTabs />

        <StatusBar>
          <ReadyText width={55}>Ready</ReadyText>
          <StatusCells>
            <StatusCell $w={60} />
            <StatusCell $w={198} />
            <StatusCell $w={43} />
            <StatusCell $w={53} />
            <StatusCell $w={46}>
              <Fit width={40}>NUM</Fit>
            </StatusCell>
            <StatusCell $w={50} />
            <StatusCell $w={44} />
            <StatusCell $w={34} />
          </StatusCells>
        </StatusBar>

        <Taskbar>
          <StartButton>
            <WindowsFlag />
            <StartLabel width={68}>start</StartLabel>
          </StartButton>
          <QuickLaunch>
            <IeIcon />
            <DesktopIcon />
            <OutlookIcon size={28.4} />
            <More>»</More>
          </QuickLaunch>
          <TaskButton>
            <OutlookIcon size={28.4} />
            <TaskLabel width={205}>Inbox - Microsoft Out...</TaskLabel>
          </TaskButton>
          <TaskButton>
            <PowerPointIcon />
            <TaskLabel width={201}>Microsoft Excel Seminar</TaskLabel>
          </TaskButton>
          <TaskButton>
            <IePageIcon />
            <TaskLabel width={207}>http://www.hcplc.org...</TaskLabel>
          </TaskButton>
          <TaskButton $active $pad={19}>
            <ExcelIcon size={28.4} />
            <TaskLabel width={196}>Microsoft Excel - Book1</TaskLabel>
          </TaskButton>
          <Tray>
            <TrayToggle>
              <svg width="10" height="14" viewBox="0 0 10 14">
                <path d="M8 1L2.5 7 8 13" fill="none" stroke="#fff" strokeWidth="3" />
              </svg>
            </TrayToggle>
            <OutlookIcon size={28.4} />
            <Clock width={81}>11:56 AM</Clock>
          </Tray>
        </Taskbar>
      </Screen>
      <Tooltip>
        <Fit width={114}>Percent Style</Fit>
      </Tooltip>
    </>
  );
}
